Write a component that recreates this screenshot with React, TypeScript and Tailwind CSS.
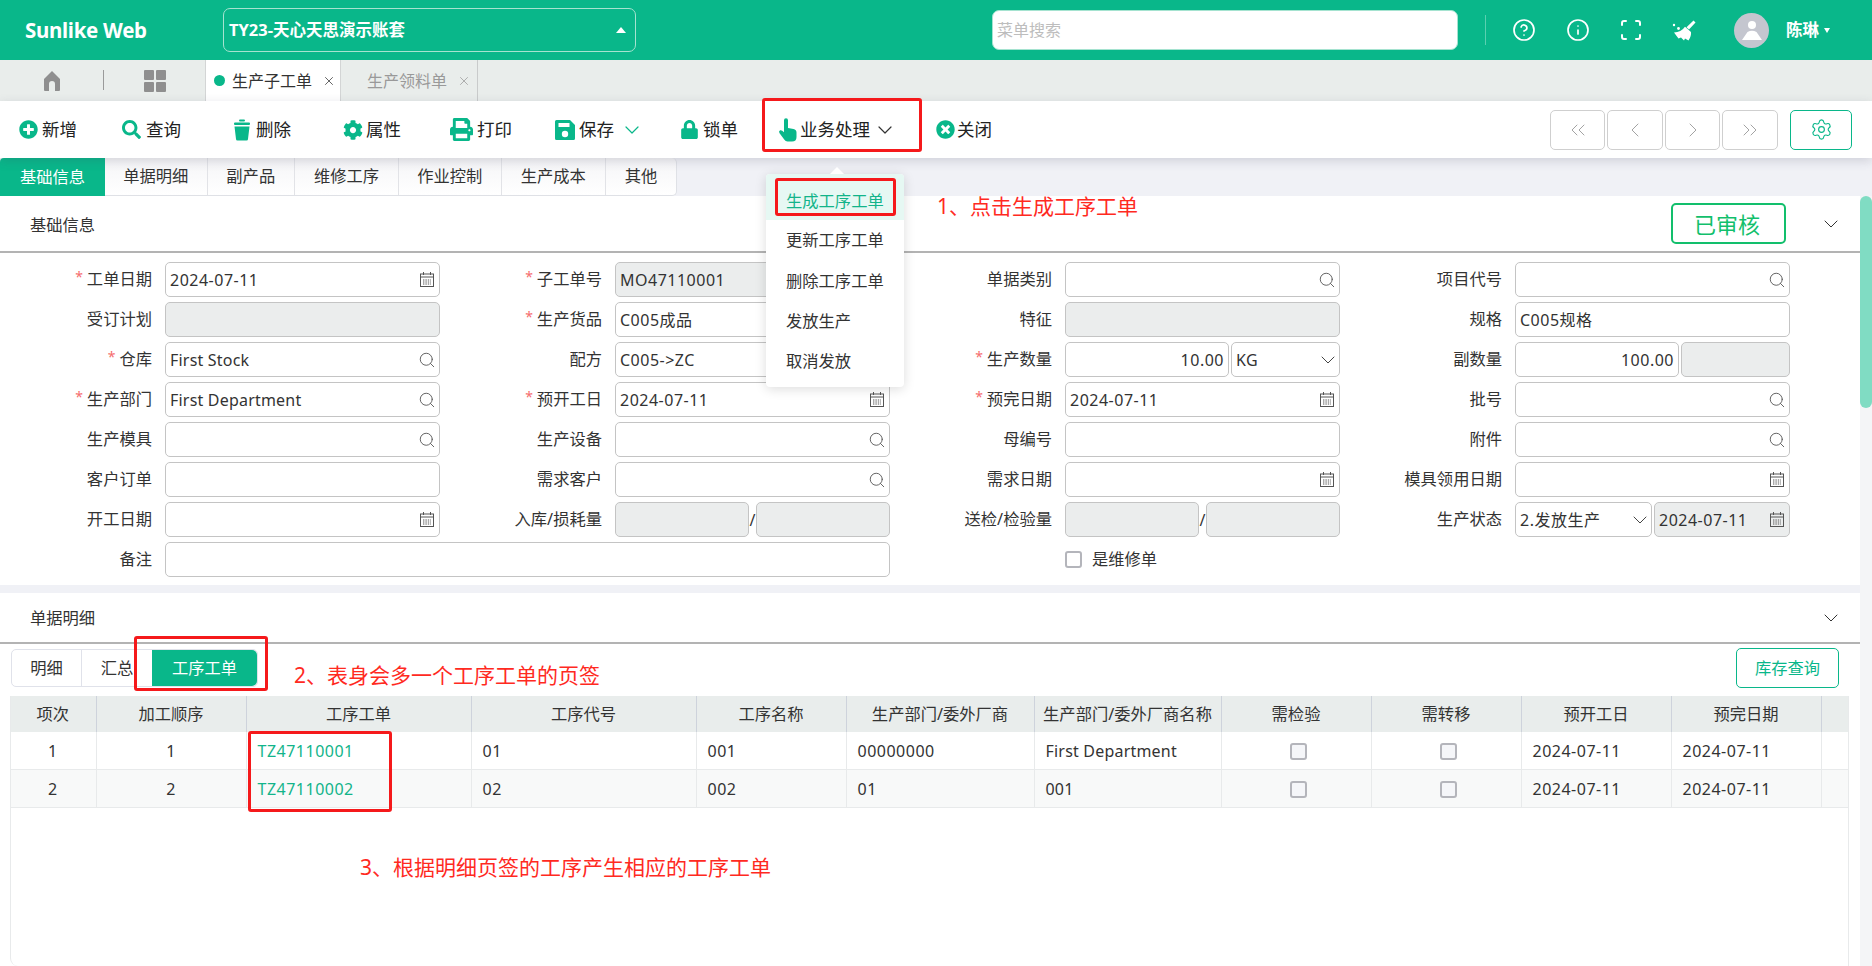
import type { ReactNode } from 'react';
import { ChevronDown, ChevronLeft, ChevronRight, ChevronsLeft, ChevronsRight, CircleHelp, Info, Scan, Search, Settings, X } from 'lucide-react';
import { FaCog, FaLock, FaPlusCircle, FaPrint, FaSearch, FaTimesCircle } from 'react-icons/fa';

const HomeIcon = () => (
  <svg width="18" height="22" viewBox="0 0 18 22" fill="#8f8f8f">
    <path d="M9 1 L17 9 V20 a1 1 0 0 1-1 1 H12 V14 a3 3 0 0 0-6 0 V21 H2 a1 1 0 0 1-1-1 V9 Z" />
  </svg>
);

const GridIcon = () => (
  <svg width="22" height="22" viewBox="0 0 22 22" fill="#8f8f8f">
    <rect x="0" y="0" width="10" height="10" rx="1" />
    <rect x="12" y="0" width="10" height="10" rx="1" />
    <rect x="0" y="12" width="10" height="10" rx="1" />
    <rect x="12" y="12" width="10" height="10" rx="1" />
  </svg>
);

const TrashIcon = () => (
  <svg width="18" height="22" viewBox="0 0 18 22" fill="#09b78a">
    <rect x="6" y="0.5" width="6" height="2" rx="1" />
    <rect x="1" y="3.5" width="16" height="2.5" rx="1" />
    <path d="M1.5 7.5 H16.5 L15 20 a1.5 1.5 0 0 1-1.5 1.5 H4.5 A1.5 1.5 0 0 1 3 20 Z" />
  </svg>
);

const SaveIcon = () => (
  <svg width="20" height="20" viewBox="0 0 20 20">
    <path fill="#09b78a" d="M1.5 0 H15 L20 5 V18.5 a1.5 1.5 0 0 1-1.5 1.5 H1.5 A1.5 1.5 0 0 1 0 18.5 V1.5 A1.5 1.5 0 0 1 1.5 0 Z" />
    <rect x="3.5" y="3" width="11" height="4" fill="#fff" />
    <circle cx="10" cy="14" r="3.2" fill="#fff" />
  </svg>
);

const HandIcon = () => (
  <svg width="20" height="24" viewBox="0 0 20 24" fill="#09b78a">
    <path d="M6 2.2 a2 2 0 0 1 4 0 V10 L15.5 11 Q18.5 11.8 18.5 14.5 V19 Q18.5 23.5 14 23.5 H9.5 Q7.5 23.5 6.4 21.8 L1.4 15 Q0.4 13 2.2 12.2 Q3.8 11.8 6 14.2 Z" />
  </svg>
);

const BroomIcon = () => (
  <svg width="24" height="21" viewBox="0 0 24 21" fill="#fff" className="ml-[29px]">
    <path d="M21.5 0.5 L23.5 2.5 L17 9.5 L14.5 7.2 Z" />
    <path d="M13 6.8 L19 12 Q19.5 16 16.5 20.5 L13 18.5 L12 20.5 L9 17.5 L6.5 18.5 L2 12.5 Q9 12.5 13 6.8 Z" />
    <circle cx="2" cy="5" r="1.2" />
    <circle cx="6.5" cy="8.5" r="1.4" />
  </svg>
);

const DateIcon = () => (
  <svg width="14" height="15" viewBox="0 0 14 15" fill="none" stroke="#555" strokeWidth="1" className="shrink-0 mr-[1px]">
    <rect x="0.5" y="2" width="13" height="12.5" />
    <path d="M0.5 5 H13.5 M3.5 0 V3 M10.5 0 V3" />
    <path d="M3 8 H11 M3 10 H11 M3 12 H11" strokeDasharray="1.4 1" />
  </svg>
);

const UserAvatar = () => (
  <div className="w-[35px] h-[35px] rounded-full bg-[#c4c6cf] flex items-center justify-center">
    <svg width="24" height="24" viewBox="0 0 24 24" fill="#fff">
      <circle cx="12" cy="7" r="4" />
      <path d="M2 22 L7.5 14 Q12 11.5 16.5 14 L22 22 Z" />
    </svg>
  </div>
);

const tools = [
  { icon: <FaPlusCircle size={19} color="#09b78a" />, label: '新增', cls: 'w-[103px]', iconCls: 'w-[23px]' },
  { icon: <FaSearch size={19} color="#09b78a" />, label: '查询', cls: 'w-[111px]', iconCls: 'w-[24px]' },
  { icon: <TrashIcon />, label: '删除', cls: 'w-[110px]', iconCls: 'w-[23px]' },
  { icon: <FaCog size={20} color="#09b78a" />, label: '属性', cls: 'w-[107px]', iconCls: 'w-[23px]' },
  { icon: <FaPrint size={23} color="#09b78a" />, label: '打印', cls: 'w-[105px]', iconCls: 'w-[27px]' },
];

const tabs2 = [
  { label: '单据明细', cls: 'w-[102.5px]' },
  { label: '副产品', cls: 'w-[87.5px]' },
  { label: '维修工序', cls: 'w-[104px]' },
  { label: '作业控制', cls: 'w-[102.5px]' },
  { label: '生产成本', cls: 'w-[104.5px]' },
  { label: '其他', cls: 'w-[70px]' },
];

const inputBase = 'h-[35px] rounded-[5px] border-[1.5px] border-[#c4c4c4] flex items-center px-[4px] text-[16px] text-[#333] tracking-[0.5px] overflow-hidden whitespace-nowrap';

function Box({ value, kind, off, right, tight, cls = 'w-[275px]' }: { value?: string; kind?: 'search' | 'date' | 'select'; off?: boolean; right?: boolean; tight?: boolean; cls?: string }) {
  return (
    <div className={`${inputBase} ${cls} ${off ? 'bg-[#ebeded]' : 'bg-white'} ${right ? 'justify-end' : 'justify-between'}`}>
      <span className={tight ? 'tracking-[0.2px]' : ''}>{value}</span>
      {kind === 'search' && <Search size={18} strokeWidth={1.2} color="#555" className="shrink-0 -mr-[1px]" />}
      {kind === 'date' && <DateIcon />}
      {kind === 'select' && <ChevronDown size={24} strokeWidth={1} color="#444" className="shrink-0 -mr-[5px]" />}
    </div>
  );
}

function Field({ label, req, children, cls = '' }: { label: string; req?: boolean; children: ReactNode; cls?: string }) {
  return (
    <div className={`flex items-center ${cls}`}>
      <div className="w-[137px] mr-[13px] text-right text-[16.3px] text-[#333] leading-none whitespace-nowrap shrink-0">
        {req && <span className="text-[#f56c6c] text-[14px] mr-[4px] relative -top-[3px]">*</span>}
        {label}
      </div>
      {children}
    </div>
  );
}

const Slash = () => <span className="w-[7px] text-center text-[#333] text-[16px] leading-none">/</span>;

const cols = ['w-[86px]', 'w-[150px]', 'w-[225px]', 'w-[225px]', 'w-[150px]', 'w-[188px]', 'w-[187px]', 'w-[150px]', 'w-[150px]', 'w-[150px]', 'w-[150px]', 'w-[28px]'];
const heads = ['项次', '加工顺序', '工序工单', '工序代号', '工序名称', '生产部门/委外厂商', '生产部门/委外厂商名称', '需检验', '需转移', '预开工日', '预完日期', ''];
const rows = [
  { n: '1', ticket: 'TZ47110001', code: '01', name: '001', dept: '00000000', deptName: 'First Department', bg: 'bg-white', h: 'h-[37px]' },
  { n: '2', ticket: 'TZ47110002', code: '02', name: '002', dept: '01', deptName: '001', bg: 'bg-[#f8f9f9]', h: 'h-[38px]' },
];

const Check = () => <span className="inline-block w-[17px] h-[17px] rounded-[3px] border-2 border-[#b4b5bb] bg-[#f5f6f9] align-middle ml-[4px]" />;

const td = 'px-[11px] border-r border-b border-[#e8eaeb] text-[16px] tracking-[0.5px] whitespace-nowrap overflow-hidden';
const tdText = `${td} pt-[2px] text-[#333]`;

export default function App() {
  return (
    <div className="relative w-full h-screen overflow-hidden flex flex-col bg-[#f0f1f6] font-['Noto_Sans','Noto_Sans_CJK_SC',sans-serif]">
      {/* top bar */}
      <header className="h-[60px] shrink-0 bg-[#09b78a] flex items-center text-white">
        <div className="w-[223px] pl-[25px] pt-[1px] text-[20.5px] font-bold tracking-[-0.3px] leading-none whitespace-nowrap">Sunlike Web</div>
        <div className="w-[413px] h-[44px] rounded-[7px] border border-[#a5e3d0] flex items-center justify-between pl-[5px] pr-[9px]">
          <span className="text-[16.5px] font-bold leading-none">TY23-天心天思演示账套</span>
          <span className="w-0 h-0 border-x-[5px] border-x-transparent border-b-[6px] border-b-white" />
        </div>
        <div className="ml-[356px] w-[466px] h-[40px] rounded-[7px] bg-white border border-[#a5e3d0] flex items-center px-[4px] text-[16px] text-[#bdbdbd]">菜单搜索</div>
        <div className="ml-[27px] w-px h-[30px] bg-[#5bd0b0]" />
        <CircleHelp size={24} strokeWidth={1.7} className="ml-[26px]" />
        <Info size={24} strokeWidth={1.7} className="ml-[30px]" />
        <Scan size={24} strokeWidth={2} className="ml-[29px]" />
        <BroomIcon />
        <div className="ml-[38px]"><UserAvatar /></div>
        <span className="ml-[17px] text-[16.5px] font-semibold leading-none">陈琳</span>
        <span className="ml-[5px] w-0 h-0 border-x-[3.5px] border-x-transparent border-t-[5px] border-t-white" />
      </header>

      {/* open page tabs */}
      <div className="h-[41px] shrink-0 bg-[#e9edeb] flex items-stretch">
        <div className="w-[103px] flex items-center justify-center"><HomeIcon /></div>
        <div className="w-px h-[20px] mt-[10px] bg-[#9a9a9a]" />
        <div className="w-[101px] flex items-center justify-center"><GridIcon /></div>
        <div className="w-[136px] bg-white border-x border-[#d3d5d5] flex items-center pl-[8px] text-[16px] text-[#333]">
          <span className="w-[11px] h-[11px] rounded-full bg-[#09b78a] mr-[7px]" />
          <span className="leading-none">生产子工单</span>
          <X size={14} strokeWidth={1.3} className="ml-[10px]" />
        </div>
        <div className="w-[137px] border-r border-[#c9cbcb] flex items-center pl-[26px] text-[16px] text-[#999]">
          <span className="leading-none">生产领料单</span>
          <X size={14} strokeWidth={1.3} className="ml-[10px]" />
        </div>
      </div>

      {/* toolbar */}
      <div className="relative z-10 h-[57px] shrink-0 bg-white flex items-center pl-[19px] pr-[20px] shadow-[0_3px_10px_rgba(60,60,90,0.18)] text-[17.5px] text-[#222]">
        {tools.map((t) => (
          <div key={t.label} className={`${t.cls} flex items-center`}>
            <span className={`${t.iconCls} flex items-center`}>{t.icon}</span>
            <span className="leading-none">{t.label}</span>
          </div>
        ))}
        <div className="w-[125px] flex items-center">
          <span className="w-[24px] flex items-center"><SaveIcon /></span>
          <span className="leading-none">保存</span>
          <ChevronDown size={24} strokeWidth={1.2} color="#09b78a" className="ml-[6px]" />
        </div>
        <div className="w-[98px] flex items-center">
          <span className="w-[23px] flex items-center"><FaLock size={19} color="#09b78a" /></span>
          <span className="leading-none">锁单</span>
        </div>
        <div className="w-[158px] flex items-center">
          <span className="w-[22px] flex items-center"><HandIcon /></span>
          <span className="leading-none">业务处理</span>
          <ChevronDown size={24} strokeWidth={1.2} color="#333" className="ml-[3px]" />
        </div>
        <div className="flex items-center">
          <span className="w-[21px] flex items-center"><FaTimesCircle size={19} color="#09b78a" /></span>
          <span className="leading-none">关闭</span>
        </div>
        <div className="ml-auto flex items-center gap-[2px]">
          <div className="w-[55px] h-[40px] rounded-[5px] border border-[#cfcfcf] flex items-center justify-center text-[#999]"><ChevronsLeft size={24} strokeWidth={0.9} /></div>
          <div className="w-[56px] h-[40px] rounded-[5px] border border-[#cfcfcf] flex items-center justify-center text-[#999]"><ChevronLeft size={24} strokeWidth={0.9} /></div>
          <div className="w-[55px] h-[40px] rounded-[5px] border border-[#cfcfcf] flex items-center justify-center text-[#999]"><ChevronRight size={24} strokeWidth={0.9} /></div>
          <div className="w-[56px] h-[40px] rounded-[5px] border border-[#cfcfcf] flex items-center justify-center text-[#999]"><ChevronsRight size={24} strokeWidth={0.9} /></div>
          <div className="ml-[10px] w-[62px] h-[40px] rounded-[5px] border border-[#09b78a] flex items-center justify-center text-[#09b78a]"><Settings size={23} strokeWidth={1.2} /></div>
        </div>
      </div>

      {/* section tabs */}
      <div className="h-[38px] shrink-0 flex items-stretch">
        <div className="w-[105px] bg-[#09b78a] text-white rounded-tl-[4px] flex items-center justify-center text-[16.3px] leading-none">基础信息</div>
        <div className="flex bg-gradient-to-b from-[#f5f5f7] to-white rounded-r-[5px] border-r border-b border-[#dfe1e6]">
          {tabs2.map((t) => (
            <div key={t.label} className={`${t.cls} flex items-center justify-center text-[16.3px] text-[#333] leading-none border-r border-[#e2e3e7] last:border-r-0`}>{t.label}</div>
          ))}
        </div>
      </div>

      <div className="flex-1 min-h-0 flex">
        <div className="flex-1 min-w-0 flex flex-col">
          {/* basic info */}
          <section className="h-[389px] shrink-0 bg-white">
            <div className="h-[57px] border-b-2 border-[#b3b3b3] flex items-center justify-between pl-[30px] pr-[17px]">
              <span className="text-[16.3px] text-[#333] leading-none pt-[3px]">基础信息</span>
              <div className="flex items-center">
                <div className="w-[115px] h-[41px] rounded-[5px] border-2 border-[#12bf6c] text-[#12bf6c] text-[22px] flex items-center justify-center leading-none pr-[3px]">已审核</div>
                <ChevronDown size={24} strokeWidth={1} color="#333" className="ml-[33px]" />
              </div>
            </div>
            <div className="grid grid-cols-[repeat(4,450px)] auto-rows-[35px] gap-y-[5px] pl-[15px] pt-[9px]">
              <Field label="工单日期" req><Box value="2024-07-11" kind="date" /></Field>
              <Field label="子工单号" req><Box value="MO47110001" off /></Field>
              <Field label="单据类别"><Box kind="search" /></Field>
              <Field label="项目代号"><Box kind="search" /></Field>

              <Field label="受订计划"><Box off /></Field>
              <Field label="生产货品" req><Box value="C005成品" /></Field>
              <Field label="特征"><Box off /></Field>
              <Field label="规格"><Box value="C005规格" /></Field>

              <Field label="仓库" req><Box value="First Stock" tight kind="search" /></Field>
              <Field label="配方"><Box value="C005->ZC" /></Field>
              <Field label="生产数量" req>
                <Box value="10.00" right cls="w-[164px]" />
                <Box value="KG" kind="select" cls="w-[109px] ml-[2px]" />
              </Field>
              <Field label="副数量">
                <Box value="100.00" right cls="w-[164px]" />
                <Box off cls="w-[109px] ml-[2px]" />
              </Field>

              <Field label="生产部门" req><Box value="First Department" tight kind="search" /></Field>
              <Field label="预开工日" req><Box value="2024-07-11" kind="date" /></Field>
              <Field label="预完日期" req><Box value="2024-07-11" kind="date" /></Field>
              <Field label="批号"><Box kind="search" /></Field>

              <Field label="生产模具"><Box kind="search" /></Field>
              <Field label="生产设备"><Box kind="search" /></Field>
              <Field label="母编号"><Box /></Field>
              <Field label="附件"><Box kind="search" /></Field>

              <Field label="客户订单"><Box /></Field>
              <Field label="需求客户"><Box kind="search" /></Field>
              <Field label="需求日期"><Box kind="date" /></Field>
              <Field label="模具领用日期"><Box kind="date" /></Field>

              <Field label="开工日期"><Box kind="date" /></Field>
              <Field label="入库/损耗量">
                <Box off cls="w-[134px]" /><Slash /><Box off cls="w-[134px]" />
              </Field>
              <Field label="送检/检验量">
                <Box off cls="w-[134px]" /><Slash /><Box off cls="w-[134px]" />
              </Field>
              <Field label="生产状态">
                <Box value="2.发放生产" kind="select" cls="w-[137px]" />
                <Box value="2024-07-11" kind="date" off cls="w-[136px] ml-[2px]" />
              </Field>

              <Field label="备注" cls="col-span-2"><Box cls="w-[725px]" /></Field>
              <div className="flex items-center pl-[150px]">
                <span className="w-[17px] h-[17px] rounded-[3px] border-2 border-[#b4b5bb] bg-white mr-[10px]" />
                <span className="text-[16.3px] text-[#333] leading-none">是维修单</span>
              </div>
            </div>
          </section>

          {/* detail */}
          <section className="mt-[8px] flex-1 min-h-0 bg-white flex flex-col">
            <div className="h-[51px] shrink-0 border-b-2 border-[#b3b3b3] flex items-center justify-between pl-[30px] pr-[17px]">
              <span className="text-[16.3px] text-[#333] leading-none pt-[2px]">单据明细</span>
              <ChevronDown size={24} strokeWidth={1} color="#333" />
            </div>
            <div className="flex items-center justify-between pl-[11px] pr-[21px] pt-[4px] pb-[8px]">
              <div className="h-[38px] flex items-stretch border border-[#e0e2ea] rounded-[5px] text-[16.3px] leading-none text-[#333]">
                <div className="w-[70px] flex items-center justify-center border-r border-[#e0e2ea]">明细</div>
                <div className="w-[70px] flex items-center justify-center">汇总</div>
                <div className="w-[105px] flex items-center justify-center bg-[#09b78a] text-white rounded-r-[5px]">工序工单</div>
              </div>
              <div className="w-[103px] h-[40px] rounded-[5px] border border-[#09b78a] text-[#09b78a] flex items-center justify-center text-[16.3px] leading-none">库存查询</div>
            </div>
            <div className="ml-[10px] mr-[11px] flex-1 min-h-0 border-l border-r border-[#e8eaeb] rounded-bl-[8px] overflow-hidden">
              <table className="table-fixed border-collapse w-[1838px] -ml-px">
                <colgroup>{cols.map((c, i) => <col key={i} className={c} />)}</colgroup>
                <thead>
                  <tr className="h-[36px] bg-[#e9edec]">
                    {heads.map((h, i) => (
                      <th key={i} className="border-r border-[#ced3dc] text-[16.3px] font-normal text-[#333] leading-none whitespace-nowrap overflow-hidden">{h}</th>
                    ))}
                  </tr>
                </thead>
                <tbody>
                  {rows.map((r) => (
                    <tr key={r.n} className={`${r.h} ${r.bg}`}>
                      <td className={`${tdText} text-center`}>{r.n}</td>
                      <td className={`${tdText} text-center`}>{r.n}</td>
                      <td className={`${td} pt-[2px] text-[#12b48a]`}>{r.ticket}</td>
                      <td className={tdText}>{r.code}</td>
                      <td className={tdText}>{r.name}</td>
                      <td className={tdText}>{r.dept}</td>
                      <td className={tdText}><span className="tracking-[0.2px]">{r.deptName}</span></td>
                      <td className={`${td} text-center`}><Check /></td>
                      <td className={`${td} text-center`}><Check /></td>
                      <td className={tdText}>2024-07-11</td>
                      <td className={tdText}>2024-07-11</td>
                      <td className={td} />
                    </tr>
                  ))}
                </tbody>
              </table>
            </div>
          </section>
        </div>
        {/* page scrollbar */}
        <div className="w-[12px] shrink-0 bg-[#f4f5f7]">
          <div className="h-[212px] rounded-full bg-[#80dcc3]" />
        </div>
      </div>

      {/* action dropdown */}
      <div className="absolute z-20 left-[766px] top-[174px] w-[138px] h-[213px] bg-white rounded-[4px] shadow-[0_2px_12px_rgba(0,0,0,0.14)] text-[16.3px] text-[#333]">
        <span className="absolute -top-[7px] left-[64px] w-0 h-0 border-x-[7px] border-x-transparent border-b-[7px] border-b-white" />
        <div className="h-[46px] pt-[8px] bg-[#e6f8f3] text-[#12b48a] flex items-center pl-[20px] rounded-t-[4px] leading-none">生成工序工单</div>
        <div className="h-[41px] flex items-center pl-[20px] leading-none">更新工序工单</div>
        <div className="h-[40px] flex items-center pl-[20px] leading-none">删除工序工单</div>
        <div className="h-[40px] flex items-center pl-[20px] leading-none">发放生产</div>
        <div className="h-[40px] flex items-center pl-[20px] leading-none">取消发放</div>
      </div>

      {/* screenshot annotations */}
      <div className="absolute z-30 left-[762px] top-[98px] w-[160px] h-[54px] border-[3px] border-[#f5191b] rounded-[3px]" />
      <div className="absolute z-30 left-[775px] top-[178px] w-[121px] h-[38px] border-[3px] border-[#f5191b] rounded-[3px]" />
      <div className="absolute z-30 left-[134px] top-[636px] w-[134px] h-[55px] border-[3px] border-[#f5191b] rounded-[3px]" />
      <div className="absolute z-30 left-[248px] top-[731px] w-[144px] h-[81px] border-[3px] border-[#f5191b] rounded-[3px]" />
      <span className="absolute z-30 left-[937px] top-[192px] text-[21px] leading-[28px] text-[#ff2a1f] whitespace-nowrap">1、点击生成工序工单</span>
      <span className="absolute z-30 left-[294px] top-[661px] text-[21px] leading-[28px] text-[#ff2a1f] whitespace-nowrap">2、表身会多一个工序工单的页签</span>
      <span className="absolute z-30 left-[360px] top-[853px] text-[21px] leading-[28px] text-[#ff2a1f] whitespace-nowrap">3、根据明细页签的工序产生相应的工序工单</span>
    </div>
  );
}
